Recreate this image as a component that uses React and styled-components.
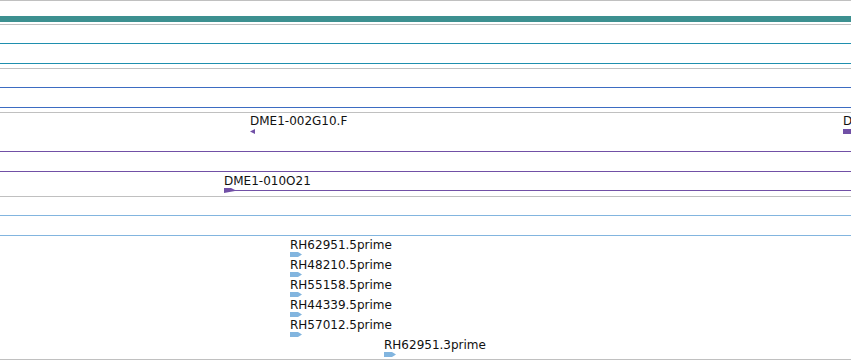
import styled, { createGlobalStyle } from 'styled-components';

const GlobalStyle = createGlobalStyle`
  html, body {
    margin: 0;
    padding: 0;
    background: #ffffff;
    overflow: hidden;
  }
  body {
    font-family: "DejaVu Sans", "Liberation Sans", sans-serif;
  }
`;

const View = styled.div`
  width: 851px;
  height: 361px;
  display: flex;
  flex-direction: column;
  overflow: hidden;
`;

const Track = styled.div`
  position: relative;
  height: ${(p) => p.h}px;
  border-top: 1px solid #c0c0c0;
  border-bottom: ${(p) => (p.last ? '1px solid #c0c0c0' : 'none')};
  display: flex;
  flex-direction: column;
  flex-shrink: 0;
`;

const Bar = styled.div`
  margin-top: 15px;
  height: 6px;
  background: #3d9090;
`;

const Lane = styled.div`
  height: ${(p) => p.h}px;
  box-sizing: border-box;
  border-bottom: 1px solid ${(p) => p.color};
  flex-shrink: 0;
`;

const Feature = styled.div`
  position: absolute;
  display: flex;
  flex-direction: column;
  align-items: flex-start;
`;

const Label = styled.span`
  font-size: 12px;
  line-height: 12px;
  color: #111111;
  white-space: nowrap;
`;

const Glyph = styled.svg`
  display: block;
  margin-top: ${(p) => p.gap}px;
  overflow: visible;
`;

const PURPLE = '#7150a6';
const LIGHT = '#82b5df';

function RightArrow({ color, gap }) {
  return (
    <Glyph width="12" height="5" gap={gap}>
      <polygon points="0,0 8,0 12,2.5 8,5 0,5" fill={color} />
    </Glyph>
  );
}

function LeftArrow({ color, gap }) {
  return (
    <Glyph width="5" height="5" gap={gap}>
      <polygon points="0,2.5 5,0 5,5" fill={color} />
    </Glyph>
  );
}

function LongFeature({ color, gap, width }) {
  return (
    <Glyph width={width} height="5" gap={gap}>
      <polygon points="0,0 7,0 11,2 11,3 0,5" fill={color} />
      <rect x="10" y="2" width={width - 10} height="1" fill={color} />
    </Glyph>
  );
}

const rhRows = [
  { name: 'RH62951.5prime', x: 290, y: 42 },
  { name: 'RH48210.5prime', x: 290, y: 62 },
  { name: 'RH55158.5prime', x: 290, y: 82 },
  { name: 'RH44339.5prime', x: 290, y: 102 },
  { name: 'RH57012.5prime', x: 290, y: 122 },
  { name: 'RH62951.3prime', x: 384, y: 142 },
];

export default function App() {
  return (
    <>
      <GlobalStyle />
      <View>
        <Track h={23}>
          <Bar />
        </Track>
        <Track h={43}>
          <Lane h={19} color="#1f8fae" />
          <Lane h={20} color="#1f8fae" />
        </Track>
        <Track h={43}>
          <Lane h={19} color="#3d6cc2" />
          <Lane h={20} color="#3d6cc2" />
        </Track>
        <Track h={83}>
          <Lane h={39} color={PURPLE} />
          <Lane h={20} color={PURPLE} />
          <Feature style={{ left: 250, top: 2 }}>
            <Label>DME1-002G10.F</Label>
            <LeftArrow color={PURPLE} gap={2} />
          </Feature>
          <Feature style={{ left: 843, top: 2 }}>
            <Label>DME1-002G10.R</Label>
            <RightArrow color={PURPLE} gap={2} />
          </Feature>
          <Feature style={{ left: 224, top: 62 }}>
            <Label>DME1-010O21</Label>
            <LongFeature color={PURPLE} gap={1} width={627} />
          </Feature>
        </Track>
        <Track h={162} last>
          <Lane h={19} color={LIGHT} />
          <Lane h={20} color={LIGHT} />
          {rhRows.map((r) => (
            <Feature key={r.name} style={{ left: r.x, top: r.y }}>
              <Label>{r.name}</Label>
              <RightArrow color={LIGHT} gap={1} />
            </Feature>
          ))}
        </Track>
      </View>
    </>
  );
}
